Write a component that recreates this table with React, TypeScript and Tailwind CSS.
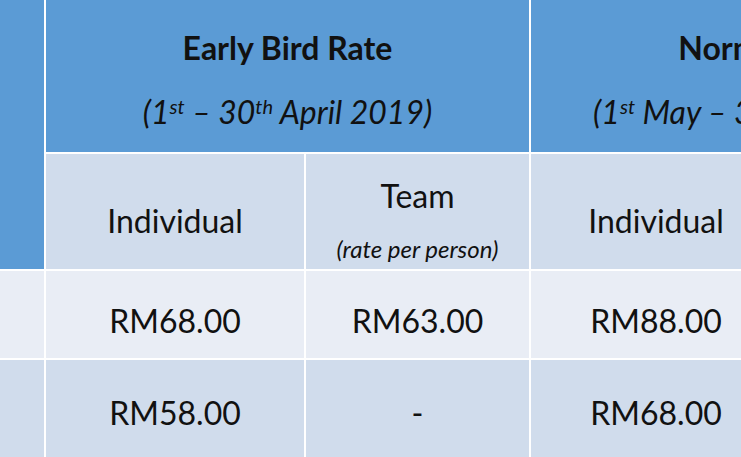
export default function App() {
  const font = { fontFamily: "Lato, 'Open Sans', sans-serif" };
  return (
    <div className="w-[741px] h-[457px] overflow-hidden bg-white" style={font}>
      <div className="grid grid-cols-[44px_258px_223px_250px_221px] grid-rows-[152px_115px_87px_100px] gap-[2px] text-[#111]">
        {/* top header */}
        <div className="row-span-2 bg-[#5b9bd5]" />
        <div className="col-span-2 bg-[#5b9bd5] flex flex-col items-center pt-[32px]">
          <div className="text-[32px] font-bold leading-none">Early Bird Rate</div>
          <div className="text-[32px] italic leading-none mt-[32px] whitespace-nowrap">
            (1<sup className="text-[20px]">st</sup> – 30<sup className="text-[20px]">th</sup> April 2019)
          </div>
        </div>
        <div className="col-span-2 bg-[#5b9bd5] flex flex-col items-center pt-[32px]">
          <div className="text-[32px] font-bold leading-none whitespace-nowrap">Normal Rate</div>
          <div className="text-[32px] italic leading-none mt-[32px] whitespace-nowrap">
            (1<sup className="text-[20px]">st</sup> May – 31<sup className="text-[20px]">st</sup> May 2019)
          </div>
        </div>

        {/* sub header */}
        <div className="bg-[#d0dcec] flex items-center justify-center text-[32px] pt-[18px]">Individual</div>
        <div className="bg-[#d0dcec] flex flex-col items-center pt-[26px]">
          <div className="text-[32px] leading-none">Team</div>
          <div className="text-[24px] italic mt-[25px] leading-none whitespace-nowrap">(rate per person)</div>
        </div>
        <div className="bg-[#d0dcec] flex items-center justify-center text-[32px] pt-[18px]">Individual</div>
        <div className="bg-[#d0dcec] flex flex-col items-center pt-[26px]">
          <div className="text-[32px] leading-none">Team</div>
          <div className="text-[24px] italic mt-[25px] leading-none whitespace-nowrap">(rate per person)</div>
        </div>

        {/* row 1 */}
        <div className="bg-[#e9edf5]" />
        <div className="bg-[#e9edf5] flex items-center justify-center text-[32px] pt-[12px]">RM68.00</div>
        <div className="bg-[#e9edf5] flex items-center justify-center text-[32px] pt-[12px]">RM63.00</div>
        <div className="bg-[#e9edf5] flex items-center justify-center text-[32px] pt-[12px]">RM88.00</div>
        <div className="bg-[#e9edf5] flex items-center justify-center text-[32px] pt-[12px]">RM83.00</div>

        {/* row 2 */}
        <div className="bg-[#d0dcec]" />
        <div className="bg-[#d0dcec] flex items-center justify-center text-[32px] pt-[6px]">RM58.00</div>
        <div className="bg-[#d0dcec] flex items-center justify-center text-[32px] pt-[6px]">-</div>
        <div className="bg-[#d0dcec] flex items-center justify-center text-[32px] pt-[6px]">RM68.00</div>
        <div className="bg-[#d0dcec] flex items-center justify-center text-[32px] pt-[6px]">-</div>
      </div>
    </div>
  );
}
